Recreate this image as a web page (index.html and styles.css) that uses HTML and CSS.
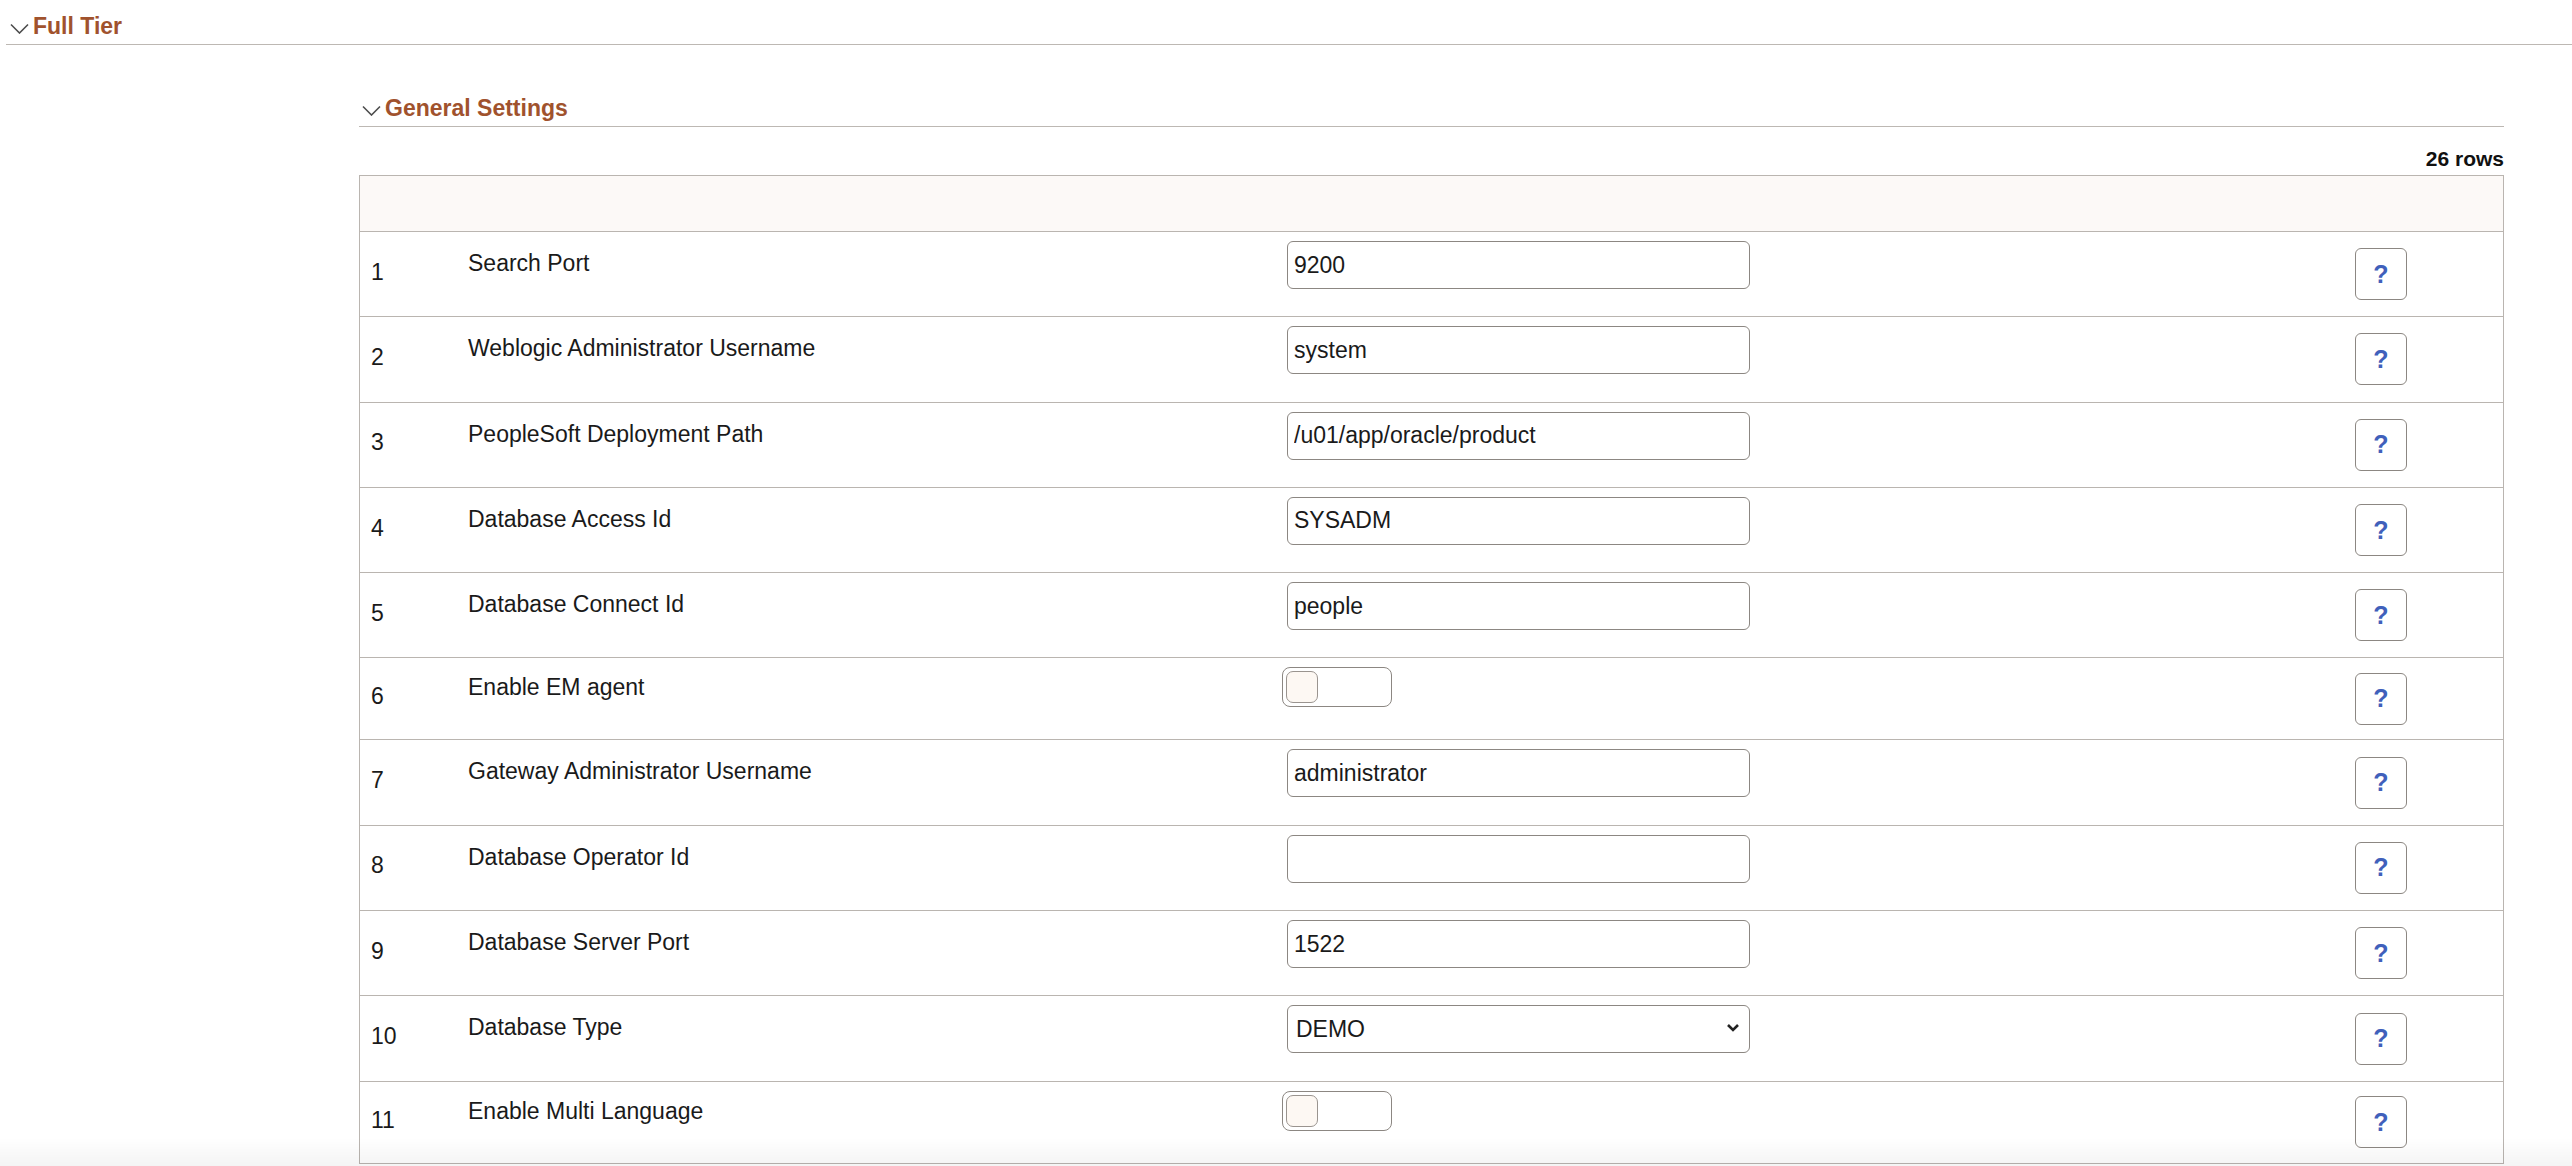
FILE: index.html
```html
<!DOCTYPE html>
<html lang="en">
<head>
  <meta charset="UTF-8">
  <meta name="viewport" content="width=device-width, initial-scale=1">
  <title>Full Tier - General Settings</title>
  <link rel="stylesheet" href="styles.css">
</head>
<body>
  <h1 class="tier-header">
    <svg class="chevron" width="19" height="11" viewBox="0 0 19 11"><path d="M1 1.5 L9.5 10 L18 1.5" fill="none" stroke="#4d4d4d" stroke-width="1.6"/></svg>Full Tier
  </h1>

  <section class="settings">
    <h2 class="section-header">
      <svg class="chevron" width="19" height="11" viewBox="0 0 19 11"><path d="M1 1.5 L9.5 10 L18 1.5" fill="none" stroke="#4d4d4d" stroke-width="1.6"/></svg>General Settings
    </h2>
    <div class="row-count">26 rows</div>

    <div class="grid">
      <div class="grid-head"></div>

      <div class="row">
        <div class="num">1</div>
        <div class="label">Search Port</div>
        <div class="control"><input class="field" type="text" value="9200"></div>
        <div class="help"><button class="help-btn">?</button></div>
      </div>

      <div class="row">
        <div class="num">2</div>
        <div class="label">Weblogic Administrator Username</div>
        <div class="control"><input class="field" type="text" value="system"></div>
        <div class="help"><button class="help-btn">?</button></div>
      </div>

      <div class="row">
        <div class="num">3</div>
        <div class="label">PeopleSoft Deployment Path</div>
        <div class="control"><input class="field" type="text" value="/u01/app/oracle/product"></div>
        <div class="help"><button class="help-btn">?</button></div>
      </div>

      <div class="row">
        <div class="num">4</div>
        <div class="label">Database Access Id</div>
        <div class="control"><input class="field" type="text" value="SYSADM"></div>
        <div class="help"><button class="help-btn">?</button></div>
      </div>

      <div class="row">
        <div class="num">5</div>
        <div class="label">Database Connect Id</div>
        <div class="control"><input class="field" type="text" value="people"></div>
        <div class="help"><button class="help-btn">?</button></div>
      </div>

      <div class="row row-toggle">
        <div class="num">6</div>
        <div class="label">Enable EM agent</div>
        <div class="control"><span class="toggle" role="switch" aria-checked="false"><span class="knob"></span></span></div>
        <div class="help"><button class="help-btn">?</button></div>
      </div>

      <div class="row">
        <div class="num">7</div>
        <div class="label">Gateway Administrator Username</div>
        <div class="control"><input class="field" type="text" value="administrator"></div>
        <div class="help"><button class="help-btn">?</button></div>
      </div>

      <div class="row">
        <div class="num">8</div>
        <div class="label">Database Operator Id</div>
        <div class="control"><input class="field" type="text" value=""></div>
        <div class="help"><button class="help-btn">?</button></div>
      </div>

      <div class="row">
        <div class="num">9</div>
        <div class="label">Database Server Port</div>
        <div class="control"><input class="field" type="text" value="1522"></div>
        <div class="help"><button class="help-btn">?</button></div>
      </div>

      <div class="row">
        <div class="num">10</div>
        <div class="label">Database Type</div>
        <div class="control">
          <div class="select-wrap">
            <select class="field">
              <option>DEMO</option>
              <option>SYS</option>
            </select>
            <svg class="select-arrow" width="14" height="9" viewBox="0 0 14 9"><path d="M2 2 L7 7 L12 2" fill="none" stroke="#222" stroke-width="2.6"/></svg>
          </div>
        </div>
        <div class="help"><button class="help-btn">?</button></div>
      </div>

      <div class="row row-toggle">
        <div class="num">11</div>
        <div class="label">Enable Multi Language</div>
        <div class="control"><span class="toggle" role="switch" aria-checked="false"><span class="knob"></span></span></div>
        <div class="help"><button class="help-btn">?</button></div>
      </div>
    </div>
  </section>

  <div class="bottom-shade"></div>
</body>
</html>
```

FILE: styles.css
```css
body {
  margin: 0;
  font-family: 'Liberation Sans', Arial, sans-serif;
  color: #1a1a1a;
  background: #fff;
}
.tier-header,
.section-header {
  margin: 0;
  font-size: 23px;
  font-weight: bold;
  line-height: 26px;
  color: #a0522d;
  border-bottom: 1px solid #bdb8b3;
}
.tier-header {
  margin-left: 6px;
  padding: 13px 0 5px 4px;
}
.chevron {
  vertical-align: baseline;
  margin-right: 4px;
}
.settings {
  margin: 50px 68px 0 359px;
}
.section-header {
  padding: 0 0 5px 3px;
}
.row-count {
  margin-top: 20px;
  font-size: 21px;
  font-weight: bold;
  line-height: 24px;
  text-align: right;
  color: #111;
}
.grid {
  margin-top: 4px;
  border: 1px solid #bab5b0;
  border-bottom: none;
}
.grid-head {
  height: 55px;
  background: #fcf9f7;
  border-bottom: 1px solid #bab5b0;
}
.row {
  box-sizing: border-box;
  height: 85.3px;
  display: grid;
  grid-template-columns: 108px 814px 1073px 52px 1fr;
  border-bottom: 1px solid #bab5b0;
  font-size: 23px;
}
.row-toggle {
  height: 82px;
}
.num {
  align-self: center;
  padding: 0 0 5px 11px;
  line-height: 26px;
}
.label {
  padding-top: 7px;
  line-height: 48px;
}
.row-toggle .label {
  line-height: 44px;
}
.control {
  padding-top: 9px;
}
.field {
  box-sizing: border-box;
  margin-left: 5px;
  width: 463px;
  height: 48px;
  padding: 0 8px 0 6px;
  border: 1px solid #8c8782;
  border-radius: 6px;
  font-family: 'Liberation Sans', Arial, sans-serif;
  font-size: 23px;
  color: #1a1a1a;
  background: #fff;
  outline: none;
}
select.field {
  appearance: none;
  -webkit-appearance: none;
  padding-left: 8px;
}
.select-wrap {
  position: relative;
  display: inline-block;
}
.select-arrow {
  position: absolute;
  left: 444px;
  top: 18px;
  pointer-events: none;
}
.toggle {
  box-sizing: border-box;
  display: block;
  width: 110px;
  height: 40px;
  padding: 3px;
  border: 1px solid #8c8782;
  border-radius: 8px;
  background: #fff;
}
.knob {
  box-sizing: border-box;
  display: block;
  width: 32px;
  height: 32px;
  border: 1px solid #9a948f;
  border-radius: 7px;
  background: #fdf8f3;
}
.help {
  align-self: center;
}
.help-btn {
  display: block;
  width: 52px;
  height: 52px;
  padding: 0;
  border: 1px solid #8c8782;
  border-radius: 6px;
  background: #fff;
  font-family: 'Liberation Sans', Arial, sans-serif;
  font-size: 25px;
  font-weight: bold;
  color: #4060bb;
}
.bottom-shade {
  position: fixed;
  left: 0;
  right: 0;
  bottom: 0;
  height: 28px;
  background: linear-gradient(rgba(0, 0, 0, 0), rgba(0, 0, 0, 0.045));
  pointer-events: none;
}
```
